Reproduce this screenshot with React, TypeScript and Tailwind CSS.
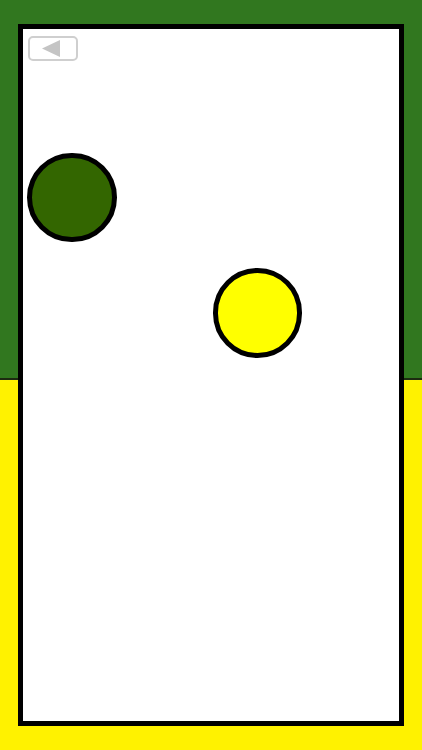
export default function App() {
  return (
    <div className="w-[422px] h-[750px] overflow-hidden bg-[linear-gradient(to_bottom,#31771f_378px,#1c2a10_378px,#1c2a10_380px,#fff200_380px)] pt-[24px] pl-[18px]">
      <div className="relative w-[386px] h-[702px] border-[5px] border-black bg-white">
        {/* back button */}
        <button className="absolute left-[5px] top-[7px] w-[50px] h-[25px] rounded-[5px] border-2 border-[#cfcfcf] bg-white flex items-center justify-center">
          <svg width="18" height="17" viewBox="0 0 18 17" className="mr-[5px]">
            <polygon points="0,8.5 18,0 18,17" fill="#c4c4c4" />
          </svg>
        </button>

        {/* balls */}
        <div className="absolute left-[4px] top-[124px] w-[90px] h-[89px] rounded-full border-[5px] border-black bg-[#336600]" />
        <div className="absolute left-[190px] top-[239px] w-[89px] h-[90px] rounded-full border-[5px] border-black bg-[#ffff00]" />
      </div>
    </div>
  )
}
